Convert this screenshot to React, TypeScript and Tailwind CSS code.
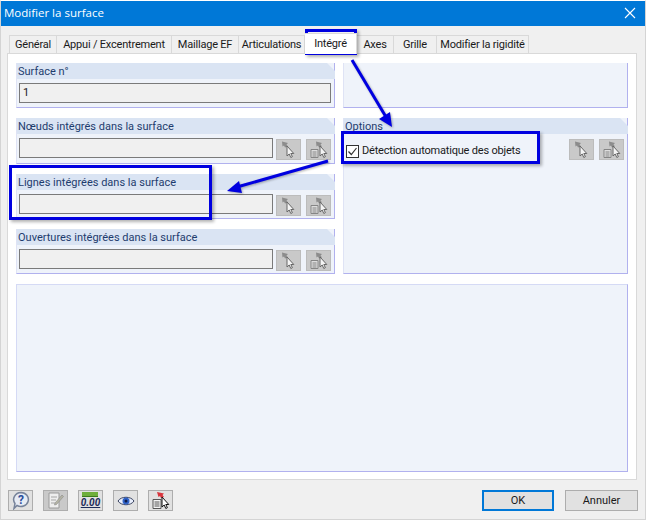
import type { ReactNode } from "react";

const TABS = [
  { label: "Général", w: "w-[48px]" },
  { label: "Appui / Excentrement", w: "w-[115px]" },
  { label: "Maillage EF", w: "w-[67px]" },
  { label: "Articulations", w: "w-[66px]" },
  { label: "Intégré", w: "w-[52px]", active: true },
  { label: "Axes", w: "w-[37px]" },
  { label: "Grille", w: "w-[43px]" },
  { label: "Modifier la rigidité", w: "w-[92px]" },
];

function PickIcon() {
  return (
    <svg width="19" height="19" viewBox="0 0 19 19">
      <path d="M3 1.500l6 1.500-1.500 1.500 1.500 2-3 1-1-2-1.500 1z" fill="#8c8c8c" />
      <path d="M8 6v10l2.200-2 1.600 3.500 1.600-.8-1.600-3.200h3z" fill="#f4f4f4" stroke="#666" strokeWidth="1" />
    </svg>
  );
}

function ListPickIcon() {
  return (
    <svg width="21" height="19" viewBox="0 0 21 19">
      <path d="M3 9.500h7v8H3z" fill="#ddd" stroke="#858585" />
      <path d="M4.500 12h4M4.500 14h4M4.500 16h4" stroke="#858585" />
      <path d="M8 1.500l6 1.500-1.500 1.500 1.500 2-3 1-1-2-1.500 1z" fill="#8c8c8c" />
      <path d="M12 6v10l2.200-2 1.600 3.500 1.600-.8-1.600-3.200h3z" fill="#f4f4f4" stroke="#666" />
    </svg>
  );
}

function PickButtons() {
  return (
    <div className="flex gap-[5px]">
      <div className="w-[25px] h-[21px] flex items-center justify-center bg-[#c9c9c9] border border-[#bcbcbc]">
        <PickIcon />
      </div>
      <div className="w-[25px] h-[21px] flex items-center justify-center bg-[#c9c9c9] border border-[#bcbcbc]">
        <ListPickIcon />
      </div>
    </div>
  );
}

function Group({ title, className, children }: { title?: string; className?: string; children?: ReactNode }) {
  return (
    <div className={`flex flex-col bg-[#eff3fa] border-l border-l-[#dfe3f5] border-r border-b border-r-[#b1b1ee] border-b-[#b1b1ee] ${className ?? ""}`}>
      {title !== undefined && (
        <div className="h-[16px] pl-[1px] -mr-px bg-[#dae4f3] text-[#1e3c6e] leading-[18px] [clip-path:polygon(0_0,calc(100%-8px)_0,100%_8px,100%_100%,0_100%)]">
          {title}
        </div>
      )}
      {children}
    </div>
  );
}

function PickField({ title, className }: { title: string; className: string }) {
  return (
    <Group title={title} className={className}>
      <div className="flex items-start pl-[2px] pr-[3px] pt-[4px] gap-[3px]">
        <div className="w-[254px] h-[20px] bg-[#f0f0f0] border border-[#7a7a7a]" />
        <div className="pt-px">
          <PickButtons />
        </div>
      </div>
    </Group>
  );
}

function ToolButton({ children, disabled }: { children: ReactNode; disabled?: boolean }) {
  return (
    <div className={`w-[25px] h-[21px] flex items-center justify-center border border-[#adadad] ${disabled ? "bg-[#c9c9c9]" : "bg-[#e1e1e1]"}`}>
      {children}
    </div>
  );
}

export default function App() {
  return (
    <div className="relative w-[646px] h-[520px] overflow-hidden flex flex-col bg-[#f0f0f0] border border-[#d4d4d4] border-t-white text-[11px] text-[#1a1a1a] font-['Roboto','Liberation_Sans',sans-serif]">
      {/* title bar */}
      <div className="h-[25px] shrink-0 flex items-center justify-between pl-[3px] pr-[9px] pb-[1px] bg-[#0078d7] text-white text-[11.5px] font-['Open_Sans',sans-serif]">
        <span>Modifier la surface</span>
        <svg width="12" height="12" viewBox="0 0 12 12" stroke="white" strokeWidth="1.1">
          <path d="M1 1l10 10M11 1L1 11" />
        </svg>
      </div>

      {/* tabs */}
      <div className="flex h-[18px] mt-[9px] ml-[8px] items-end tracking-[-0.2px]">
        {TABS.map((t) => (
          <div
            key={t.label}
            className={`${t.w} shrink-0 flex items-center justify-center whitespace-nowrap border-t border-r border-[#d9d9d9] first:border-l ${
              t.active ? "h-[21px] -mb-px z-10 bg-white" : "h-[18px] pt-[2px] bg-[#f0f0f0]"
            }`}
          >
            {t.label}
          </div>
        ))}
      </div>

      {/* tab body */}
      <div className="ml-[6px] w-[630px] h-[427px] flex flex-col gap-[10px] px-[8px] pt-[9px] pb-[7px] bg-white border border-[#d9d9d9]">
        <div className="flex gap-[8px]">
          <div className="w-[319px] flex flex-col gap-[10px]">
            <Group title="Surface n°" className="h-[45px]">
              <div className="pl-[2px] pr-[3px] pt-[4px]">
                <div className="h-[20px] pl-[3px] leading-[18px] bg-[#f0f0f0] border border-[#7a7a7a]">1</div>
              </div>
            </Group>
            <PickField title="Nœuds intégrés dans la surface" className="h-[46px]" />
            <PickField title="Lignes intégrées dans la surface" className="h-[45px]" />
            <PickField title="Ouvertures intégrées dans la surface" className="h-[45px]" />
          </div>
          <div className="w-[285px] flex flex-col gap-[10px]">
            <Group className="h-[45px]" />
            <Group title="Options" className="flex-1">
              <div className="flex items-start justify-between pl-[2px] pr-[3px] pt-[5px]">
                <div className="flex items-center gap-[3px] pt-[4px]">
                  <div className="w-[13px] h-[13px] flex items-center justify-center bg-white border border-[#333]">
                    <svg width="11" height="11" viewBox="0 0 11 11" fill="none" stroke="#333" strokeWidth="1.2">
                      <path d="M1.500 5.500l2.800 3L9.500 2" />
                    </svg>
                  </div>
                  <span className="tracking-[-0.2px]">Détection automatique des objets</span>
                </div>
                <PickButtons />
              </div>
            </Group>
          </div>
        </div>
        <div className="flex-1 bg-[#eff3fa] border border-[#d5daf5] border-r-[#b1b1ee] border-b-[#b1b1ee]" />
      </div>

      {/* bottom bar */}
      <div className="flex items-start justify-between pl-[7px] pr-[7px] pt-[10px]">
        <div className="flex gap-[10px]">
          <ToolButton>
            <svg width="20" height="19" viewBox="0 0 20 19">
              <path d="M10 1.500a7.500 7 0 1 1-4 13L3 17.500l1-5A7.500 7 0 0 1 10 1.500z" fill="#e6ebf4" stroke="#77839a" strokeWidth="1.5" />
              <text x="10" y="13" textAnchor="middle" fontSize="12" fontWeight="700" fill="#2b4c9b">?</text>
            </svg>
          </ToolButton>
          <ToolButton disabled>
            <svg width="19" height="19" viewBox="0 0 19 19">
              <path d="M3 2h10v15H3z" fill="#eeeeee" stroke="#9a9a9a" />
              <path d="M5 6h6M5 9h5M5 12h4" stroke="#a5a5a5" />
              <path d="M9 12l7-8 1.500 1.500-7 8-2 .5z" fill="#b5b5a5" stroke="#8a8a8a" strokeWidth=".6" />
            </svg>
          </ToolButton>
          <ToolButton>
            <div className="flex flex-col items-center leading-none">
              <div className="w-[16px] h-[5px] bg-[#6fae3c] border-b border-[#3d7a1c]" />
              <span className="text-[10px] font-bold italic text-[#1c2c5a] leading-[12px] underline">0.00</span>
            </div>
          </ToolButton>
          <ToolButton>
            <svg width="18" height="12" viewBox="0 0 18 12">
              <path d="M1 6c3-5 13-5 16 0-3 5-13 5-16 0z" fill="#e8eefc" stroke="#39425f" />
              <circle cx="9" cy="6" r="3.500" fill="#2f62c8" />
              <circle cx="9" cy="6" r="1.500" fill="#0d1b4a" />
            </svg>
          </ToolButton>
          <ToolButton>
            <svg width="21" height="19" viewBox="0 0 21 19">
              <path d="M3 8.500h8v9H3z" fill="#f3f3f3" stroke="#555" />
              <path d="M4.500 11h5M4.500 13h5M4.500 15h5" stroke="#555" />
              <path d="M7 1l7 1.500-1.500 1.500 1.500 2-3 1-1-2-1.500 1z" fill="#d8343c" />
              <path d="M12 6v10l2.200-2 1.600 3.500 1.600-.8-1.600-3.200h3z" fill="#fff" stroke="#111" />
            </svg>
          </ToolButton>
        </div>
        <div className="flex gap-[11px]">
          <div className="w-[72px] h-[21px] pt-[2px] flex items-center justify-center bg-[#e1e1e1] border-2 border-[#0078d7]">OK</div>
          <div className="w-[73px] h-[21px] pt-[2px] flex items-center justify-center bg-[#e1e1e1] border border-[#adadad]">Annuler</div>
        </div>
      </div>

      {/* annotation overlays */}
      <div className="absolute left-[304px] top-[28px] w-[52px] h-[26px] border-[3px] border-[#0000e0] shadow-[2px_2px_3px_rgba(0,0,0,0.3)]" />
      <div className="absolute left-[340px] top-[130px] w-[199px] h-[33px] border-[3px] border-[#0000e0] shadow-[2px_2px_3px_rgba(0,0,0,0.3)]" />
      <div className="absolute left-[8px] top-[164px] w-[203px] h-[55px] border-[3px] border-[#0000e0] shadow-[2px_2px_3px_rgba(0,0,0,0.3)]" />
      <svg className="absolute left-0 top-0 drop-shadow-[1px_1px_1px_rgba(0,0,0,0.3)]" width="644" height="518" viewBox="0 0 644 518">
        <path d="M351 59L385 116" stroke="#0000e0" strokeWidth="3" fill="none" />
        <path d="M391 126L378 118L389 111z" fill="#0000e0" />
        <path d="M327 160L236 186" stroke="#0000e0" strokeWidth="3" fill="none" />
        <path d="M226 190L238 180L241 192z" fill="#0000e0" />
      </svg>
    </div>
  );
}
